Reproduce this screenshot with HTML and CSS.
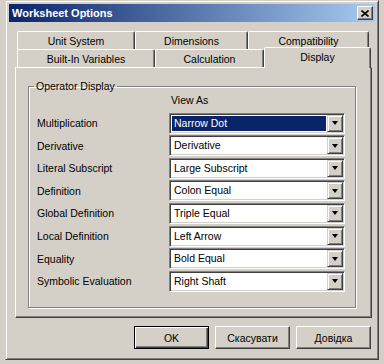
FILE: index.html
```html
<!DOCTYPE html>
<html lang="en">
<head>
    <meta charset="UTF-8">
    <title>Worksheet Options</title>
    <link rel="stylesheet" href="styles.css">
</head>
<body>
    <div class="window">
        <div class="titlebar">
            <span class="title">Worksheet Options</span>
            <span class="close">
                <svg width="8" height="7" viewBox="0 0 8 7"><path d="M0.5 0.5 L7.5 6.5 M7.5 0.5 L0.5 6.5" stroke="#000" stroke-width="1.6" fill="none"/></svg>
            </span>
        </div>

        <div class="sheet">
            <div class="tabrow">
                <div class="tab w-unit">Unit System</div>
                <div class="tab w-dim">Dimensions</div>
                <div class="tab w-comp">Compatibility</div>
            </div>
            <div class="tabrow">
                <div class="tab w-built">Built-In Variables</div>
                <div class="tab w-calc">Calculation</div>
                <div class="tab w-disp active">Display</div>
            </div>

            <div class="panel">
                <fieldset class="group">
                    <legend>Operator Display</legend>
                    <div class="grid">
                        <span></span>
                        <span class="viewas">View As</span>

                        <span class="lbl">Multiplication</span>
                        <div class="combo selected"><span class="value">Narrow Dot</span><span class="drop"></span></div>

                        <span class="lbl">Derivative</span>
                        <div class="combo"><span class="value">Derivative</span><span class="drop"></span></div>

                        <span class="lbl">Literal Subscript</span>
                        <div class="combo"><span class="value">Large Subscript</span><span class="drop"></span></div>

                        <span class="lbl">Definition</span>
                        <div class="combo"><span class="value">Colon Equal</span><span class="drop"></span></div>

                        <span class="lbl">Global Definition</span>
                        <div class="combo"><span class="value">Triple Equal</span><span class="drop"></span></div>

                        <span class="lbl">Local Definition</span>
                        <div class="combo"><span class="value">Left Arrow</span><span class="drop"></span></div>

                        <span class="lbl">Equality</span>
                        <div class="combo"><span class="value">Bold Equal</span><span class="drop"></span></div>

                        <span class="lbl">Symbolic Evaluation</span>
                        <div class="combo"><span class="value">Right Shaft</span><span class="drop"></span></div>
                    </div>
                </fieldset>
            </div>
        </div>

        <div class="buttons">
            <button class="btn default">OK</button>
            <button class="btn">Скасувати</button>
            <button class="btn">Довідка</button>
        </div>
    </div>
</body>
</html>
```

FILE: styles.css
```css
body {
    margin: 0;
    background: #d4d0c8;
    font-family: "Liberation Sans", Arial, sans-serif;
    font-size: 10.5px;
    color: #000;
}

.window {
    width: 374px;
    height: 360px;
    box-sizing: border-box;
    margin-left: 5px;
    padding: 3px;
    background: #d4d0c8;
    border: 1px solid;
    border-color: #d4d0c8 #404040 #404040 #d4d0c8;
    box-shadow: inset 1px 1px #fff, inset -1px -1px #808080;
}

.titlebar {
    height: 18px;
    display: flex;
    align-items: center;
    justify-content: space-between;
    padding: 0 2px 0 3px;
    background: linear-gradient(to right, #0a246a, #a6caf0);
    color: #fff;
}
.title {
    font-weight: bold;
    font-size: 11px;
}
.close {
    width: 16px;
    height: 14px;
    box-sizing: border-box;
    display: flex;
    align-items: center;
    justify-content: center;
    background: #d4d0c8;
    border: 1px solid;
    border-color: #fff #404040 #404040 #fff;
    box-shadow: inset -1px -1px #808080;
}

.sheet {
    margin: 9px 3px 0 6px;
}

.tabrow {
    display: flex;
    height: 18px;
    padding-left: 2px;
}
.tab {
    height: 18px;
    box-sizing: border-box;
    padding-top: 2px;
    line-height: 14px;
    text-align: center;
    background: #d4d0c8;
    border-top: 1px solid #fff;
    border-left: 1px solid #fff;
    border-right: 1px solid #404040;
    box-shadow: inset -1px 0 #808080;
    border-radius: 2px 2px 0 0;
}
.w-unit { width: 118px; }
.w-dim { width: 113px; }
.w-comp { width: 121px; }
.w-built { width: 138px; }
.w-calc { width: 109px; }
.w-disp { width: 107px; }

.tab.active {
    position: relative;
    z-index: 1;
    height: 21px;
    margin-top: -2px;
    padding-top: 2px;
}

.panel {
    height: 251px;
    box-sizing: border-box;
    padding: 12px 15px 0 12px;
    border: 1px solid;
    border-color: #fff #404040 #404040 #fff;
    box-shadow: inset -1px -1px #808080;
}

.group {
    margin: 0;
    height: 228px;
    box-sizing: border-box;
    padding: 0 9px 0 8px;
    border: 1px solid #808080;
    box-shadow: inset 1px 1px #fff, 1px 1px #fff;
}
.group legend {
    padding: 0 2px;
    margin-left: -3px;
    line-height: 13px;
}

.grid {
    display: grid;
    grid-template-columns: 132px 176px;
    grid-template-rows: 18px repeat(8, 21px);
    row-gap: 1.6px;
}
.viewas {
    padding-left: 2px;
    line-height: 14px;
}
.lbl {
    align-self: center;
}

.combo {
    display: flex;
    align-items: stretch;
    height: 21px;
    box-sizing: border-box;
    background: #fff;
    border: 1px solid;
    border-color: #808080 #fff #fff #808080;
    box-shadow: inset 1px 1px #404040, inset -1px -1px #d4d0c8;
    padding: 1px;
}
.combo .value {
    flex: 1;
    margin: 1px;
    padding-left: 2px;
    line-height: 15px;
}
.combo.selected .value {
    background: #0a246a;
    color: #fff;
}
.drop {
    width: 16px;
    box-sizing: border-box;
    display: flex;
    align-items: center;
    justify-content: center;
    background: #d4d0c8;
    border: 1px solid;
    border-color: #d4d0c8 #404040 #404040 #d4d0c8;
    box-shadow: inset 1px 1px #fff, inset -1px -1px #808080;
}
.drop::after {
    content: "";
    border-left: 3.5px solid transparent;
    border-right: 3.5px solid transparent;
    border-top: 4px solid #000;
}

.buttons {
    display: flex;
    justify-content: flex-end;
    gap: 6px;
    margin: 8px 4px 0 0;
}
.btn {
    width: 75px;
    height: 23px;
    box-sizing: border-box;
    padding: 0;
    font-family: inherit;
    font-size: 10.5px;
    color: #000;
    background: #d4d0c8;
    border: 1px solid;
    border-color: #fff #404040 #404040 #fff;
    box-shadow: inset -1px -1px #808080;
}
.btn.default {
    border-color: #000;
    box-shadow: inset 1px 1px #fff, inset -1px -1px #404040, inset -2px -2px #808080;
}
```
